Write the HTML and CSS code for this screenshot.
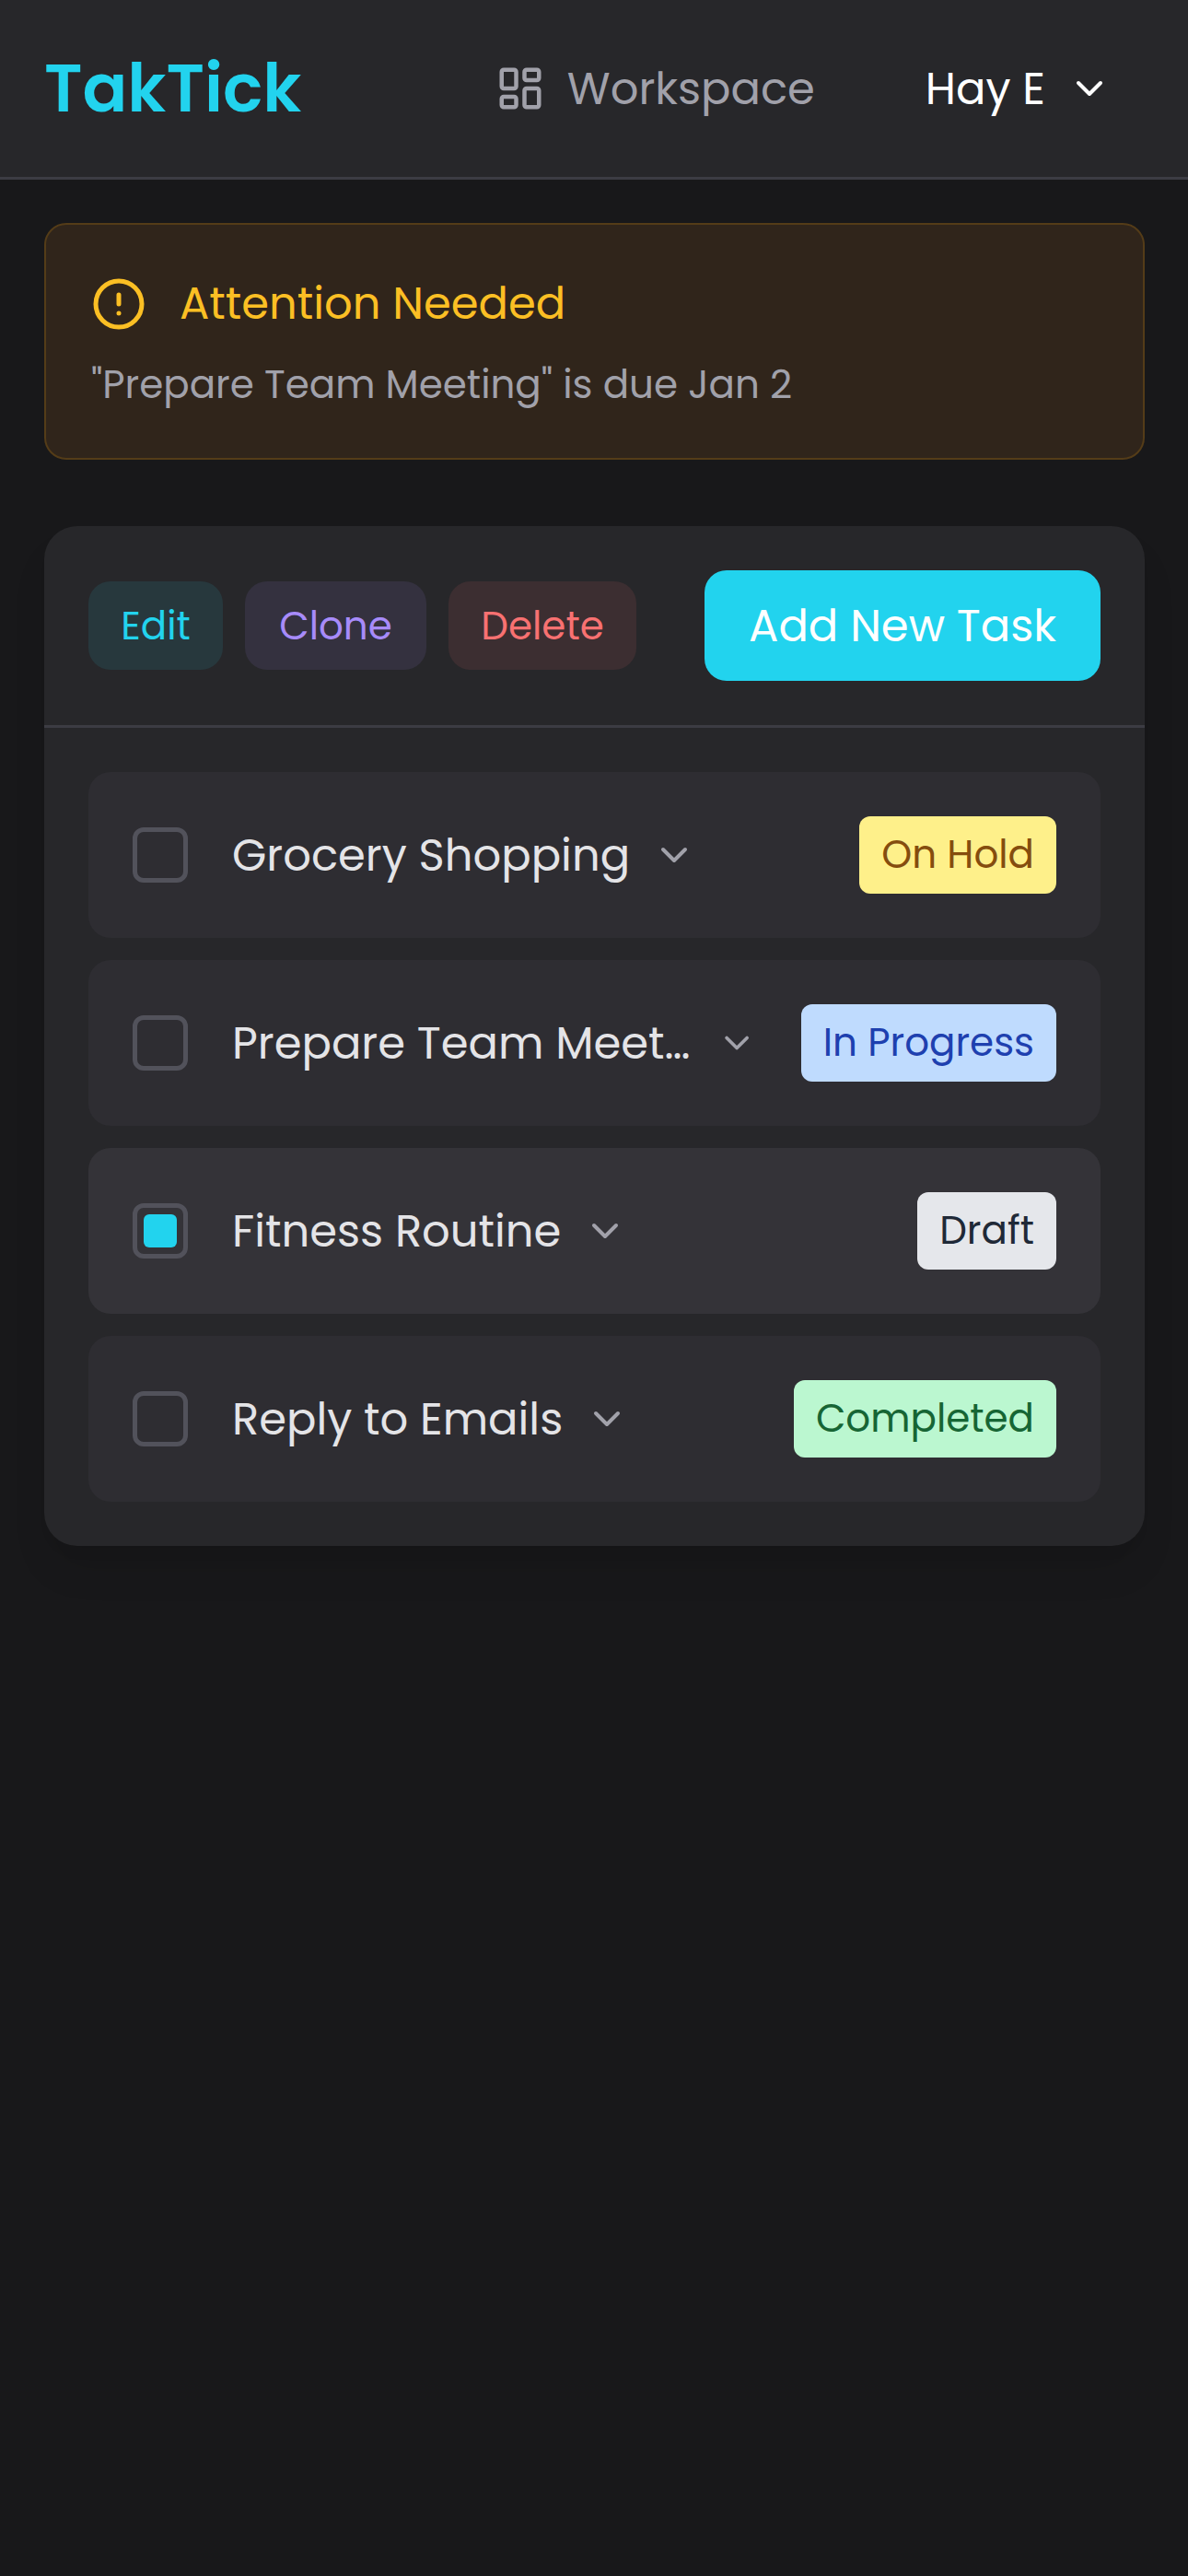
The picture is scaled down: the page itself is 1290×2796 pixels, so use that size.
FILE: index.html
```html
<!DOCTYPE html>
<html lang="en">
<head>
<meta charset="utf-8">
<title>TakTick</title>
<link rel="stylesheet" href="styles.css">
</head>
<body>
<header class="topbar">
  <div class="logo">TakTick</div>
  <nav class="nav">
    <a class="nav-link">
      <svg class="icon-nav" viewBox="0 0 24 24"><rect x="3" y="3" width="7" height="9" rx="1"/><rect x="14" y="3" width="7" height="5" rx="1"/><rect x="14" y="12" width="7" height="9" rx="1"/><rect x="3" y="16" width="7" height="5" rx="1"/></svg>
      <span class="nav-label">Workspace</span>
    </a>
    <button class="user">
      <span class="nav-label">Hay E</span>
      <svg class="icon-chevron" viewBox="0 0 24 24"><path d="m6 9 6 6 6-6"/></svg>
    </button>
  </nav>
</header>
<main class="main">
  <section class="alert">
    <div class="alert-head">
      <svg class="icon-alert" viewBox="0 0 24 24"><circle cx="12" cy="12" r="10"/><path d="M12 8v4M12 16h.01"/></svg>
      <h2 class="alert-title">Attention Needed</h2>
    </div>
    <p class="alert-text">"Prepare Team Meeting" is due Jan 2</p>
  </section>
  <section class="card">
    <div class="toolbar">
      <div class="actions">
        <button class="btn btn-edit">Edit</button>
        <button class="btn btn-clone">Clone</button>
        <button class="btn btn-delete">Delete</button>
      </div>
      <button class="btn-add">Add New Task</button>
    </div>
    <ul class="tasks">
      <li class="task">
        <span class="check"></span>
        <div class="task-name"><span class="task-title">Grocery Shopping</span><svg class="icon-chevron" viewBox="0 0 24 24"><path d="m6 9 6 6 6-6"/></svg></div>
        <span class="badge badge-hold">On Hold</span>
      </li>
      <li class="task">
        <span class="check"></span>
        <div class="task-name"><span class="task-title">Prepare Team Meeting</span><svg class="icon-chevron" viewBox="0 0 24 24"><path d="m6 9 6 6 6-6"/></svg></div>
        <span class="badge badge-progress">In Progress</span>
      </li>
      <li class="task task-selected">
        <span class="check"><span class="check-mark"></span></span>
        <div class="task-name"><span class="task-title">Fitness Routine</span><svg class="icon-chevron" viewBox="0 0 24 24"><path d="m6 9 6 6 6-6"/></svg></div>
        <span class="badge badge-draft">Draft</span>
      </li>
      <li class="task">
        <span class="check"></span>
        <div class="task-name"><span class="task-title">Reply to Emails</span><svg class="icon-chevron" viewBox="0 0 24 24"><path d="m6 9 6 6 6-6"/></svg></div>
        <span class="badge badge-done">Completed</span>
      </li>
    </ul>
  </section>
</main>
</body>
</html>
```
FILE: styles.css
```css
* {
  box-sizing: border-box;
  margin: 0;
  padding: 0;
}

body {
  min-height: 2796px;
  background: #18181a;
  color: #e4e4e7;
  font-family: Poppins, Inter, sans-serif;
  font-size: 48px;
  line-height: 72px;
}

button {
  border: 0;
  background: none;
  color: inherit;
  font: inherit;
  white-space: nowrap;
}

svg {
  flex: none;
  fill: none;
  stroke: currentColor;
  stroke-width: 2;
  stroke-linecap: round;
  stroke-linejoin: round;
}

.topbar {
  display: flex;
  align-items: center;
  justify-content: space-between;
  height: 195px;
  padding: 0 47px 0 48px;
  background: #27272a;
  border-bottom: 3px solid #3c3c43;
}

.logo {
  color: #22d3ee;
  font-size: 72px;
  font-weight: 600;
  line-height: 96px;
}

.nav {
  display: flex;
  align-items: center;
  gap: 48px;
}

.nav-link {
  display: flex;
  align-items: center;
  gap: 24px;
  padding: 24px 36px;
  color: #a1a1aa;
}

.nav-label {
  padding-top: 2px;
}

.icon-nav {
  width: 54px;
  height: 54px;
}

.user {
  display: flex;
  align-items: center;
  gap: 24px;
  padding: 24px 36px;
  color: #fff;
}

.icon-chevron {
  width: 48px;
  height: 48px;
}

.main {
  display: flex;
  flex-direction: column;
  gap: 72px;
  padding: 47px 47px 48px 48px;
}

.alert {
  height: 257px;
  padding: 50px 49px;
  background: #30251b;
  border: 2px solid #543c18;
  border-radius: 24px;
}

.alert-head {
  display: flex;
  align-items: center;
  gap: 36px;
  margin-bottom: 22px;
  color: #fbbf24;
}

.icon-alert {
  width: 60px;
  height: 60px;
}

.alert-title {
  font-size: 48px;
  font-weight: 400;
}

.alert-text {
  color: #a1a1aa;
  font-size: 42px;
  line-height: 60px;
}

.card {
  background: #27272a;
  border-radius: 36px;
  box-shadow: 0 30px 45px -9px rgba(0, 0, 0, 0.1), 0 12px 18px -12px rgba(0, 0, 0, 0.1);
}

.toolbar {
  display: flex;
  align-items: center;
  justify-content: space-between;
  padding: 48px;
  border-bottom: 3px solid #3c3c43;
}

.actions {
  display: flex;
  gap: 24px;
}

.btn {
  padding: 19px 0 17px;
  border-radius: 24px;
  font-size: 42px;
  line-height: 60px;
}

.btn-edit {
  width: 146px;
  background: #27383d;
  color: #22d3ee;
}

.btn-clone {
  width: 197px;
  background: #34313f;
  color: #a78bfa;
}

.btn-delete {
  width: 204px;
  background: #3c2e31;
  color: #f87171;
}

.btn-add {
  padding: 25px 48px 23px;
  background: #22d3ee;
  border-radius: 24px;
  color: #fff;
}

.tasks {
  display: flex;
  flex-direction: column;
  gap: 24px;
  padding: 48px;
  list-style: none;
}

.task {
  display: flex;
  align-items: center;
  gap: 48px;
  height: 180px;
  padding: 48px;
  background: #2e2d32;
  border-radius: 24px;
}

.task-selected {
  background: #343338;
}

.check {
  display: flex;
  flex: none;
  align-items: center;
  justify-content: center;
  width: 60px;
  height: 60px;
  border: 5px solid #52525b;
  border-radius: 12px;
}

.check-mark {
  width: 36px;
  height: 36px;
  background: #22d3ee;
  border-radius: 6px;
}

.task-name {
  display: flex;
  flex: 1;
  align-items: center;
  gap: 24px;
  min-width: 0;
}

.task-title {
  overflow: hidden;
  padding-top: 2px;
  text-overflow: ellipsis;
  white-space: nowrap;
}

.task .icon-chevron {
  flex-shrink: 1;
  color: #a1a1aa;
}

.badge {
  padding: 12px 24px;
  border-radius: 12px;
  font-size: 42px;
  line-height: 60px;
  white-space: nowrap;
}

.badge-hold {
  background: #fef08a;
  color: #854d0e;
}

.badge-progress {
  background: #bfdbfe;
  color: #1e40af;
}

.badge-draft {
  background: #e5e7eb;
  color: #1f2937;
}

.badge-done {
  background: #bbf7d0;
  color: #166534;
}
```
